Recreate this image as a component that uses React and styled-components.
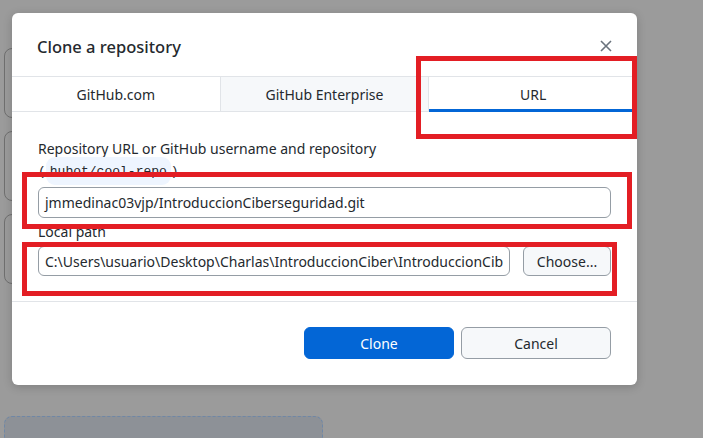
import React from 'react'
import styled, { createGlobalStyle } from 'styled-components'

const GlobalStyle = createGlobalStyle`
  html, body {
    margin: 0;
    padding: 0;
    background: #9b9b9b;
  }
  body {
    font-family: "Noto Sans", "Open Sans", sans-serif;
    color: #24292e;
  }
`

const Page = styled.div`
  position: relative;
  width: 703px;
  height: 438px;
  overflow: hidden;
  background: #9b9b9b;
  display: flex;
  flex-direction: column;
  padding: 48px 0 0 4px;
  box-sizing: border-box;
`

const CardList = styled.div`
  display: flex;
  flex-direction: column;
  gap: 13px;
  width: 320px;
`

const Card = styled.div`
  height: 68px;
  border: 1px solid #6f6f6f;
  border-radius: 8px;
`

const DropZone = styled.div`
  margin-top: auto;
  margin-bottom: -20px;
  width: 319px;
  height: 42px;
  flex: none;
  box-sizing: border-box;
  border: 1.5px dashed #6f87a6;
  border-radius: 8px;
  background: #8d9197;
`

const Dialog = styled.div`
  position: absolute;
  top: 13px;
  left: 12px;
  width: 625px;
  height: 372px;
  background: #fff;
  border-radius: 6px;
  box-shadow: 0 2px 10px rgba(0, 0, 0, 0.18);
  display: flex;
  flex-direction: column;
  overflow: hidden;
`

const Header = styled.div`
  height: 63px;
  box-sizing: border-box;
  padding: 4px 24px 0 25px;
  display: flex;
  align-items: center;
  justify-content: space-between;
`

const Title = styled.h1`
  margin: 0;
  font-size: 16.5px;
  font-weight: 500;
  color: #24292e;
`

const Close = styled.button`
  border: none;
  background: none;
  padding: 0;
  width: 14px;
  height: 14px;
  color: #6a737d;
  display: flex;
  margin-top: -1px;
`

const Tabs = styled.div`
  display: flex;
  border-top: 1px solid #e1e4e8;
  border-bottom: 1px solid #e1e4e8;
  height: 34px;
`

const Tab = styled.div`
  flex: 1;
  display: flex;
  align-items: center;
  justify-content: center;
  font-size: 14px;
  color: #24292e;
  background: ${p => (p.$muted ? '#f6f8fa' : '#fff')};
  border-left: ${p => (p.$first ? 'none' : '1px solid #e1e4e8')};
  box-shadow: ${p => (p.$active ? 'inset 0 -3px 0 #0366d6' : 'none')};
  margin-bottom: ${p => (p.$active ? '-1px' : '0')};
`

const Body = styled.div`
  padding: 28px 26px 25px 26px;
  border-bottom: 1px solid #e1e4e8;
  display: flex;
  flex-direction: column;
`

const Label = styled.div`
  font-size: 14px;
  line-height: 18px;
  margin-top: ${p => p.$gap || 0}px;
`

const HintRow = styled.div`
  display: flex;
  align-items: center;
  height: 28px;
  margin-top: -1px;
  font-family: "Liberation Mono", monospace;
  font-size: 13px;
  color: #24292e;
`

const Ref = styled.span`
  display: inline-flex;
  align-items: center;
  height: 28px;
  padding: 0 4px;
  background: #eef5ff;
  border-radius: 9px;
`

const Input = styled.div`
  height: ${p => p.$h || 31}px;
  flex: none;
  box-sizing: border-box;
  border: 1px solid #959da5;
  border-radius: 6px;
  padding: 0 6px;
  display: flex;
  align-items: center;
  font-size: 14px;
  white-space: nowrap;
  overflow: hidden;
  margin-top: ${p => p.$gap || 0}px;
`

const PathInput = styled(Input)`
  flex: 1;
  min-width: 0;
`

const PathRow = styled.div`
  display: flex;
  gap: 13px;
  margin-top: 5px;
`

const Button = styled.button`
  width: ${p => p.$w || 150}px;
  height: ${p => p.$h || 32}px;
  flex: none;
  box-sizing: border-box;
  border-radius: 6px;
  font-family: inherit;
  font-size: 14px;
  border: 1px solid ${p => (p.$primary ? '#0366d6' : '#959da5')};
  background: ${p => (p.$primary ? '#0366d6' : '#f6f8fa')};
  color: ${p => (p.$primary ? '#fff' : '#24292e')};
  padding: 0;
`

const Footer = styled.div`
  display: flex;
  justify-content: flex-end;
  gap: 7px;
  padding: 25px 26px 0 0;
`

const Mark = styled.div`
  position: absolute;
  border: 5px solid #e31e24;
  box-sizing: border-box;
  pointer-events: none;
`

const XIcon = () => (
  <svg width="14" height="14" viewBox="0 0 14 14" fill="none" stroke="currentColor" strokeWidth="1.6">
    <path d="M2 2 L12 12 M12 2 L2 12" />
  </svg>
)

export default function App() {
  return (
    <>
      <GlobalStyle />
      <Page>
        <CardList>
          <Card />
          <Card />
          <Card />
        </CardList>
        <DropZone />

        <Dialog>
          <Header>
            <Title>Clone a repository</Title>
            <Close aria-label="Close"><XIcon /></Close>
          </Header>
          <Tabs>
            <Tab $first>GitHub.com</Tab>
            <Tab $muted>GitHub Enterprise</Tab>
            <Tab $active>URL</Tab>
          </Tabs>
          <Body>
            <Label>Repository URL or GitHub username and repository</Label>
            <HintRow>(<Ref>hubot/cool-repo</Ref>)</HintRow>
            <Input $gap={2}>jmmedinac03vjp/IntroduccionCiberseguridad.git</Input>
            <Label $gap={5}>Local path</Label>
            <PathRow>
              <PathInput $h={30}>C:\Users\usuario\Desktop\Charlas\IntroduccionCiber\IntroduccionCib</PathInput>
              <Button $w={88} $h={30}>Choose...</Button>
            </PathRow>
          </Body>
          <Footer>
            <Button $primary>Clone</Button>
            <Button>Cancel</Button>
          </Footer>
        </Dialog>

        <Mark style={{ left: 416, top: 56, width: 221, height: 83 }} />
        <Mark style={{ left: 22, top: 172, width: 610, height: 57 }} />
        <Mark style={{ left: 22, top: 242, width: 595, height: 54 }} />
      </Page>
    </>
  )
}
